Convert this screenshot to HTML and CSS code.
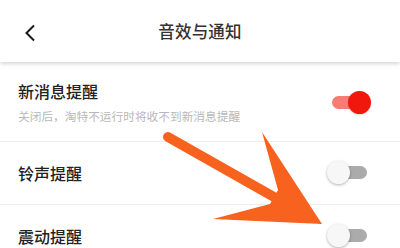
FILE: index.html
```html
<!DOCTYPE html>
<html lang="zh">
<head>
<meta charset="utf-8">
<link rel="stylesheet" href="styles.css">
</head>
<body>
<div class="page">
  <header class="header">
    <svg class="back" width="14" height="18" viewBox="0 0 14 18"><path d="M11 1.5 L3.5 9 L11 16.5" fill="none" stroke="#1a1a1a" stroke-width="2"/></svg>
    <div class="title">音效与通知</div>
  </header>
  <div class="list">
    <div class="row row-first">
      <div class="texts">
        <div class="label">新消息提醒</div>
        <div class="sub">关闭后，淘特不运行时将收不到新消息提醒</div>
      </div>
      <div class="toggle on"><span class="track"></span><span class="knob"></span></div>
    </div>
    <div class="row">
      <div class="texts"><div class="label">铃声提醒</div></div>
      <div class="toggle"><span class="track"></span><span class="knob"></span></div>
    </div>
    <div class="row">
      <div class="texts"><div class="label">震动提醒</div></div>
      <div class="toggle"><span class="track"></span><span class="knob"></span></div>
    </div>
  </div>
  <svg class="arrow" width="400" height="248" viewBox="0 0 400 248">
    <line x1="168" y1="137" x2="274" y2="197" stroke="#f8621f" stroke-width="10" stroke-linecap="round"/>
    <polygon points="262,132 322,224 213,219 270,204 278,190" fill="#f8621f"/>
  </svg>
</div>
</body>
</html>
```
FILE: styles.css
```css
html, body {
  margin: 0;
  padding: 0;
  background: #fff;
}
.page {
  position: relative;
  width: 400px;
  height: 248px;
  overflow: hidden;
  font-family: "Noto Sans CJK SC", "Noto Sans", sans-serif;
  background: #fff;
}
.header {
  position: relative;
  height: 62px;
  display: flex;
  align-items: center;
  justify-content: center;
  background: #fff;
  box-shadow: 0 2px 4px rgba(0,0,0,0.16);
  z-index: 1;
}
.back {
  position: absolute;
  left: 23px;
  top: 24px;
}
.title {
  font-size: 16.5px;
  color: #333;
  font-weight: 500;
  letter-spacing: 0.2px;
}
.list {
  display: flex;
  flex-direction: column;
}
.row {
  height: 63px;
  display: flex;
  align-items: center;
  justify-content: space-between;
  padding: 0 29px 0 18px;
  border-bottom: 1px solid #ececec;
  box-sizing: border-box;
}
.row-first {
  height: 80px;
  padding-top: 2px;
}
.texts {
  display: flex;
  flex-direction: column;
}
.label {
  font-size: 16px;
  color: #222;
  font-weight: 500;
  line-height: 20px;
}
.sub {
  font-size: 11.7px;
  color: #b8b8b8;
  line-height: 16px;
  margin-top: 7px;
}
.toggle {
  position: relative;
  width: 44px;
  height: 24px;
}
.track {
  position: absolute;
  left: 5px;
  top: 5px;
  width: 35px;
  height: 13px;
  border-radius: 7px;
  background: #ababab;
}
.knob {
  position: absolute;
  left: 0;
  top: 0;
  width: 23px;
  height: 23px;
  border-radius: 50%;
  background: #f7f7f7;
  box-shadow: 0 1px 3px rgba(0,0,0,0.3);
}
.toggle.on .track {
  background: #f77d74;
}
.toggle.on .knob {
  left: 21px;
  background: #f2170c;
  box-shadow: 0 1px 2px rgba(0,0,0,0.15);
}
.arrow {
  position: absolute;
  left: 0;
  top: 0;
  z-index: 2;
}
```
